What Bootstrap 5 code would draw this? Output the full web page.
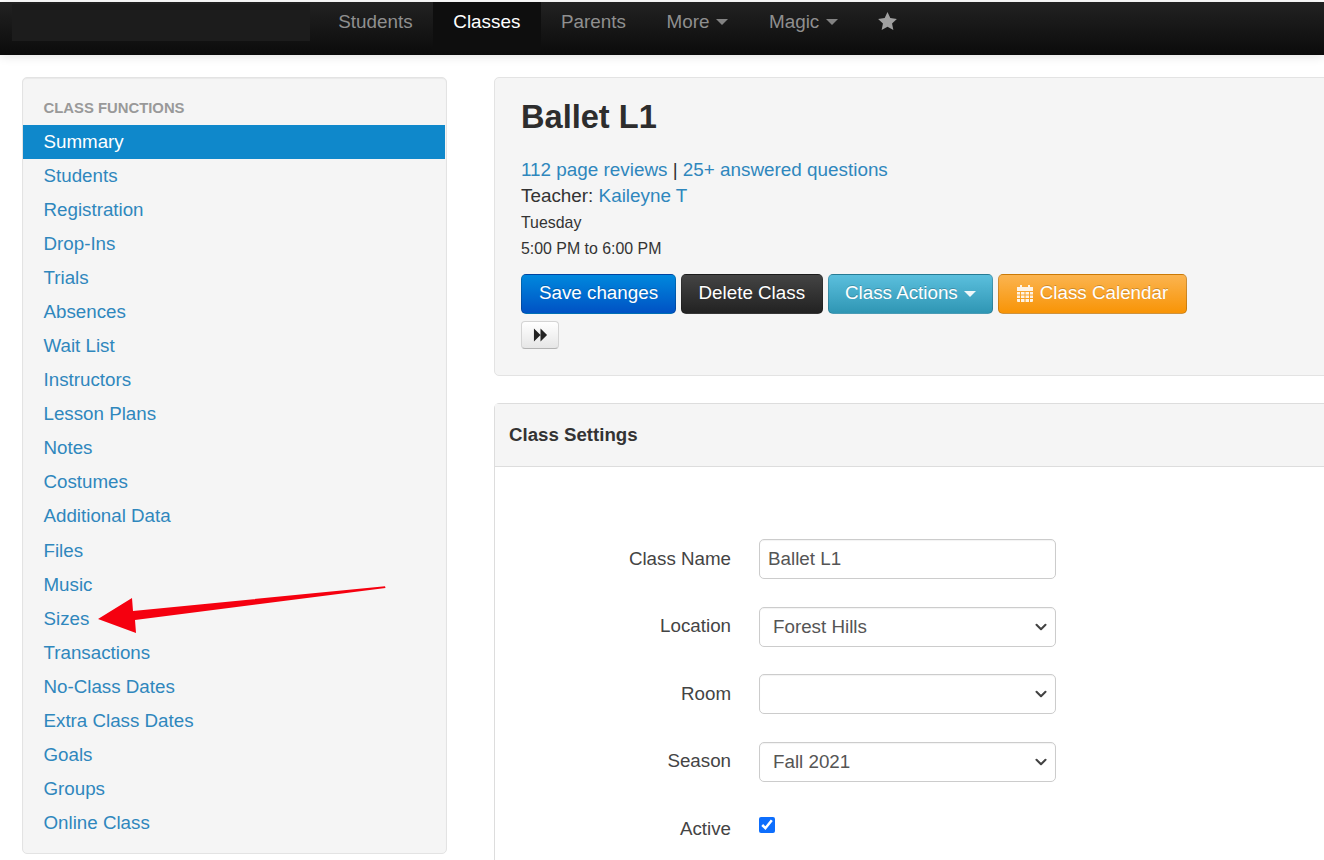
<!DOCTYPE html>
<html lang="en">
<head>
<meta charset="utf-8">
<title>Ballet L1</title>
<link href="https://cdn.jsdelivr.net/npm/bootstrap@5.3.0/dist/css/bootstrap.min.css" rel="stylesheet">
<style>
html,body{height:860px;overflow:hidden}
body{font-family:"Liberation Sans",Arial,sans-serif;font-size:18.75px;line-height:26.67px;color:#333;background:#fff;position:relative}
a{color:#2f87bd;text-decoration:none}
.topbar{height:53px;margin-top:2px;background:linear-gradient(#222,#0b0b0b);box-shadow:0 1px 10px rgba(0,0,0,.12);padding-left:12px}
.brand-blank{width:298px;height:37px;margin:2px 8px 0 0;background:#1c1c1c;flex:none}
.topbar a{color:#8f8f8f;font-size:18.85px;display:flex;align-items:center;gap:7px;height:48px;padding:0 20.3px 8px}
.topbar a.on{color:#fff;background:#0e0e0e}
.topbar a.star-link{padding-left:19.5px;padding-bottom:10px}
.mini-caret{display:inline-block;width:0;height:0;border-left:6px solid transparent;border-right:6px solid transparent;border-top:6px solid currentColor;opacity:.9}
.page-wrap{padding:22px 0 0 22px;gap:47px}
.side-panel{width:425px;height:777px;flex:none;background:#f5f5f5;border:1px solid #e3e3e3;border-radius:5px;padding-top:17px;box-shadow:inset 0 1px 1px rgba(0,0,0,.05)}
.side-head{font-size:14.85px;font-weight:700;color:#999;line-height:26px;padding-left:20.500px;height:30px;margin-bottom:0}
.side-link{display:block;height:34.05px;line-height:33px;padding-left:20.500px;margin-right:1px;color:#2f87bd}
.side-link.on{background:#0f88cb;color:#fff;height:34px}
.main-col{width:900px;flex:none}
.hero{height:299px;background:#f5f5f5;border:1px solid #e3e3e3;border-radius:5px;padding:20px 26px}
.hero h1{font-size:32.6px;font-weight:700;line-height:37px;color:#2d2d2d;margin:0 0 22px}
.hero-line{font-size:18.87px;line-height:26.4px}
.hero .tiny{font-size:15.9px;line-height:26px;display:block;color:#333}
.act-row{gap:5px;margin-top:12px}
.act{height:40px;border-radius:5px;border:1px solid rgba(0,0,0,.18);color:#fff;font-size:18.8px;padding:0 17px;display:flex;align-items:center;gap:6px;text-shadow:0 -1px 0 rgba(0,0,0,.2)}
.act-blue{background:linear-gradient(#0088dd,#0052c4)}
.act-dark{background:linear-gradient(#444,#222);padding:0 16.5px}
.act-teal{background:linear-gradient(#5bbfdd,#2f96b4);padding:0 16.5px}
.act-orange{background:linear-gradient(#fbb450,#f89406);gap:7px;padding:0 17.5px}
.act-ff{width:38px;height:28px;padding:0;justify-content:center;border:1px solid #d4d4d4;border-bottom-color:#b3b3b3;border-radius:4px;background:linear-gradient(#fff,#e6e6e6);margin-top:7px}
.settings{margin-top:27px;border:1px solid #ddd;border-radius:5px 0 0 0;height:600px}
.settings-head{height:63px;background:#f5f5f5;border-bottom:1px solid #ddd;padding-left:14px;font-weight:700;font-size:18.67px;color:#333;display:flex;align-items:center}
.settings-body{padding-top:72px}
.frow{display:flex;align-items:center;height:40px;margin-bottom:27.6px}
.flabel{width:236px;text-align:right;margin:0;color:#444;flex:none;font-size:18.75px}
.fctl{margin-left:28px;width:297px;height:40px;border:1px solid #ccc;border-radius:5px;font-size:18.8px;color:#555;padding:0 8px;box-shadow:inset 0 1px 1px rgba(0,0,0,.05)}
select.fctl{padding:0 0 0 13px;background-color:#fff;background-image:url("data:image/svg+xml,%3csvg xmlns='http://www.w3.org/2000/svg' viewBox='0 0 16 16'%3e%3cpath fill='none' stroke='%23444' stroke-linecap='round' stroke-linejoin='round' stroke-width='2.8' d='m2 5 6 6 6-6'/%3e%3c/svg%3e");background-position:right 8px center;background-size:12px 12px}
.fcheck{margin:-8px 0 0 28px;width:16px;height:16px;accent-color:#0d6efd}
.pointer{position:absolute;left:90px;top:580px;width:300px;height:60px;pointer-events:none}
</style>
</head>
<body>
<nav class="topbar d-flex align-items-start">
  <span class="brand-blank"></span>
  <a href="#">Students</a>
  <a href="#" class="on">Classes</a>
  <a href="#">Parents</a>
  <a href="#">More <span class="mini-caret"></span></a>
  <a href="#">Magic <span class="mini-caret"></span></a>
  <a href="#" class="star-link" aria-label="Favorites"><svg width="19" height="18" viewBox="0 0 24 23" fill="#a0a0a0"><path d="M12 0l3.6 7.8 8.4 1-6.2 5.8 1.7 8.4-7.5-4.2L4.500 23l1.700-8.400L0 8.800l8.400-1z"/></svg></a>
</nav>
<div class="page-wrap d-flex">
  <aside class="side-panel">
    <div class="side-head">CLASS FUNCTIONS</div>
    <a class="side-link on" href="#">Summary</a>
    <a class="side-link" href="#">Students</a>
    <a class="side-link" href="#">Registration</a>
    <a class="side-link" href="#">Drop-Ins</a>
    <a class="side-link" href="#">Trials</a>
    <a class="side-link" href="#">Absences</a>
    <a class="side-link" href="#">Wait List</a>
    <a class="side-link" href="#">Instructors</a>
    <a class="side-link" href="#">Lesson Plans</a>
    <a class="side-link" href="#">Notes</a>
    <a class="side-link" href="#">Costumes</a>
    <a class="side-link" href="#">Additional Data</a>
    <a class="side-link" href="#">Files</a>
    <a class="side-link" href="#">Music</a>
    <a class="side-link" href="#">Sizes</a>
    <a class="side-link" href="#">Transactions</a>
    <a class="side-link" href="#">No-Class Dates</a>
    <a class="side-link" href="#">Extra Class Dates</a>
    <a class="side-link" href="#">Goals</a>
    <a class="side-link" href="#">Groups</a>
    <a class="side-link" href="#">Online Class</a>
  </aside>
  <main class="main-col">
    <section class="hero">
      <h1>Ballet L1</h1>
      <div class="hero-line"><a href="#">112 page reviews</a> | <a href="#">25+ answered questions</a></div>
      <div class="hero-line">Teacher: <a href="#">Kaileyne T</a></div>
      <span class="tiny">Tuesday</span>
      <span class="tiny">5:00 PM to 6:00 PM</span>
      <div class="d-flex act-row">
        <button class="act act-blue" type="button">Save changes</button>
        <button class="act act-dark" type="button">Delete Class</button>
        <button class="act act-teal" type="button">Class Actions <span class="mini-caret"></span></button>
        <button class="act act-orange" type="button"><svg width="16" height="17" viewBox="0 0 16 17" fill="#fff" opacity=".88"><path d="M3 0h2v2h6V0h2v2h3v4H0V2h3zM0 7h3v2.500H0zm4 0h3.500v2.500H4zm4.500 0H12v2.500H8.500zM13 7h3v2.500h-3zM0 10.500h3V13H0zm4 0h3.500V13H4zm4.500 0H12V13H8.500zm4.500 0h3V13h-3zM0 14h3v3H1q-1 0-1-1zm4 0h3.500v3H4zm4.500 0H12v3H8.500zm4.500 0h3v2q0 1-1 1h-2z"/></svg>Class Calendar</button>
      </div>
      <button class="act act-ff" type="button" aria-label="Next"><svg width="15" height="14" viewBox="0 0 16 14" fill="#222"><path d="M1 0l7 7-7 7zM8 0l7 7-7 7z"/></svg></button>
    </section>
    <section class="settings">
      <div class="settings-head">Class Settings</div>
      <form class="settings-body">
        <div class="frow"><label class="flabel" for="cn">Class Name</label><input id="cn" class="fctl" value="Ballet L1"></div>
        <div class="frow"><label class="flabel" for="loc">Location</label><select id="loc" class="form-select fctl"><option>Forest Hills</option></select></div>
        <div class="frow"><label class="flabel" for="rm">Room</label><select id="rm" class="form-select fctl"><option></option></select></div>
        <div class="frow"><label class="flabel" for="sn">Season</label><select id="sn" class="form-select fctl"><option>Fall 2021</option></select></div>
        <div class="frow"><label class="flabel" for="ac">Active</label><input id="ac" class="fcheck" type="checkbox" checked></div>
      </form>
    </section>
  </main>
</div>
<svg class="pointer" viewBox="0 0 300 60" aria-hidden="true"><path d="M8 39L42 18L43 31L295 6.200L295.500 8L45 40L46 53Z" fill="#f5000f"/></svg>
<script src="https://cdn.jsdelivr.net/npm/bootstrap@5.3.0/dist/js/bootstrap.bundle.min.js"></script>
</body>
</html>
